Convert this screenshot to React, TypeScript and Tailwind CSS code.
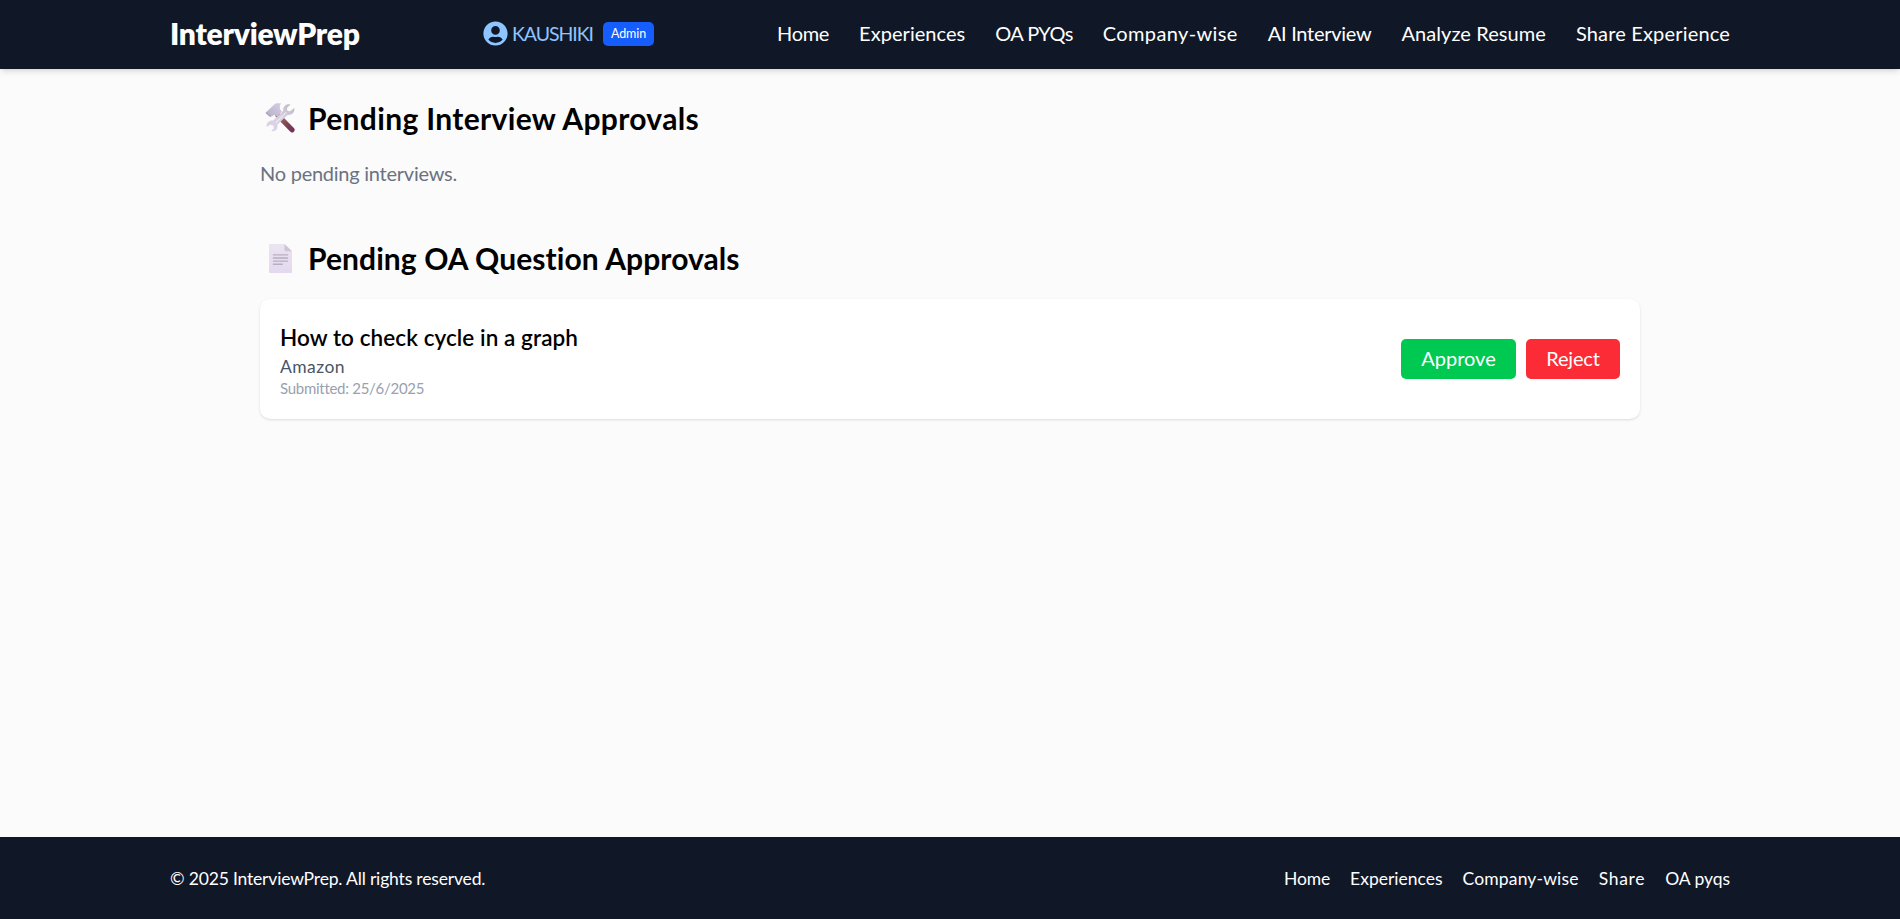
import { FaUserCircle } from 'react-icons/fa';

const navLinks = [
  { label: 'Home', tracking: 'tracking-[-0.3px]' },
  { label: 'Experiences', tracking: 'tracking-[0.05px]' },
  { label: 'OA PYQs', tracking: 'tracking-[-0.6px]' },
  { label: 'Company-wise', tracking: 'tracking-[0.38px]' },
  { label: 'AI Interview', tracking: 'tracking-[-0.28px]' },
  { label: 'Analyze Resume', tracking: 'tracking-[0.08px]' },
  { label: 'Share Experience', tracking: 'tracking-[0.17px]' },
];

const footerLinks = [
  { label: 'Home', tracking: 'tracking-[-0.15px]' },
  { label: 'Experiences', tracking: 'tracking-[0px]' },
  { label: 'Company-wise', tracking: 'tracking-[0.16px]' },
  { label: 'Share', tracking: 'tracking-[0.7px]' },
  { label: 'OA pyqs', tracking: 'tracking-[-0.05px]' },
];

function ToolsIcon() {
  return (
    <svg className="size-[30px]" viewBox="0 0 30 30" fill="none">
      <defs>
        <linearGradient id="handle" x1="13" y1="12" x2="28" y2="28" gradientUnits="userSpaceOnUse">
          <stop stopColor="#a4716b" />
          <stop offset="0.6" stopColor="#7d4450" />
          <stop offset="1" stopColor="#73305c" />
        </linearGradient>
        <linearGradient id="steel" x1="28" y1="2" x2="6" y2="28" gradientUnits="userSpaceOnUse">
          <stop stopColor="#bfb9c6" />
          <stop offset="0.5" stopColor="#d6d0de" />
          <stop offset="1" stopColor="#ddd3ec" />
        </linearGradient>
        <linearGradient id="head" x1="14" y1="2" x2="3" y2="13" gradientUnits="userSpaceOnUse">
          <stop stopColor="#d3cae2" />
          <stop offset="1" stopColor="#b9b3c6" />
        </linearGradient>
      </defs>
      <path d="M13 12.5L27 26.8" stroke="url(#handle)" strokeWidth="5.2" strokeLinecap="round" />
      <path d="M0.5 9.8L9.6 1.2Q10.6 0.3 12 0.3H16L14.8 3.2L15 6.3L17 8.6L12.2 13.8L9.8 11.8L5.2 14Z" fill="url(#head)" />
      <path d="M1.2 9.4L5.4 13.3" stroke="#a9a2b8" strokeWidth="1.4" />
      <path
        d="M25.4 1.5L22 5L22.4 7.9L25.2 8.3L29.3 5.1C30.1 9.3 26.8 12.7 22.6 11.9L12.3 21.8C13.4 25.8 10.2 29.2 6.2 28.1L8.9 25.3L8.3 22.4L5.4 21.8L1.7 24.1C1 20 4.1 16.9 8.2 17.6L18.2 8C17.6 3.6 21.3 0.1 25.4 1.5Z"
        fill="url(#steel)"
      />
      <path d="M11 19.5L21 9.7" stroke="#eae5f0" strokeWidth="1.2" strokeLinecap="round" />
    </svg>
  );
}

function PageIcon() {
  return (
    <svg className="h-[29px] w-[23px]" viewBox="0 0 23 29" fill="none">
      <defs>
        <linearGradient id="sheet" x1="11" y1="0" x2="11" y2="29" gradientUnits="userSpaceOnUse">
          <stop stopColor="#ebe4f1" />
          <stop offset="1" stopColor="#e3d9f0" />
        </linearGradient>
      </defs>
      <path d="M1 0H15.5L23 7.3V28Q23 29 22 29H1Q0 29 0 28V1Q0 0 1 0Z" fill="url(#sheet)" />
      <path d="M15.5 0L23 7.3H17Q15.5 7.3 15.5 5.8Z" fill="#cdc5d3" />
      <path d="M4.4 10.9H18.6M4.4 14H18.6M4.4 17.1H18.6M4.4 20.3H13.4" stroke="#b6afbf" strokeWidth="1.4" strokeLinecap="round" />
    </svg>
  );
}

function Header() {
  return (
    <header className="h-[69px] bg-gray-900 text-white shadow-md">
      <div className="mx-auto flex h-full w-[1560px] items-center justify-between pb-0.5">
        <div className="w-[190px] pb-px text-[30px] font-extrabold tracking-[-0.25px]">InterviewPrep</div>
        <div className="flex items-center">
          <FaUserCircle className="size-[25px] text-blue-300" />
          <span className="ml-1 w-[91px] text-[19.5px] tracking-[-1.05px] text-blue-300">KAUSHIKI</span>
          <span className="mt-px flex h-6 w-[51px] items-center justify-center rounded-[5px] bg-blue-600 text-[12.5px] tracking-[-0.1px]">
            Admin
          </span>
        </div>
        <nav className="flex gap-[30px] pb-px text-[20px]">
          {navLinks.map(({ label, tracking }) => (
            <a key={label} href="#" className={tracking}>
              {label}
            </a>
          ))}
        </nav>
      </div>
    </header>
  );
}

function Footer() {
  return (
    <footer className="h-[82px] bg-gray-900 text-[17.5px] text-white">
      <div className="mx-auto flex h-full w-[1560px] items-center justify-between pt-0.5">
        <p className="tracking-[-0.17px]">© 2025 InterviewPrep. All rights reserved.</p>
        <nav className="flex gap-5">
          {footerLinks.map(({ label, tracking }) => (
            <a key={label} href="#" className={tracking}>
              {label}
            </a>
          ))}
        </nav>
      </div>
    </footer>
  );
}

export default function App() {
  return (
    <div className="flex h-[919px] flex-col bg-[#fbfbfb] font-[Lato,sans-serif]">
      <Header />
      <main className="mx-auto w-[1380px] grow pt-[29px]">
        <section>
          <h2 className="flex h-10 items-center text-[30px] font-bold tracking-[0.34px] text-black">
            <span className="flex w-12 justify-start pl-[5px]">
              <ToolsIcon />
            </span>
            Pending Interview Approvals
          </h2>
          <p className="mt-5 h-[30px] text-[20px] leading-[30px] tracking-[-0.25px] text-gray-500">No pending interviews.</p>
        </section>
        <section className="mt-[50px]">
          <h2 className="flex h-10 items-center text-[30px] font-bold tracking-[0.08px] text-black">
            <span className="flex w-12 justify-start pl-[9px]">
              <PageIcon />
            </span>
            Pending OA Question Approvals
          </h2>
          <article className="mt-[21px] flex h-[120px] items-center justify-between rounded-[10px] bg-white px-5 shadow">
            <div className="flex flex-col pb-1">
              <h3 className="pt-0.5 text-[22.5px] leading-[35px] font-semibold tracking-[0.07px] text-black">How to check cycle in a graph</h3>
              <p className="text-[17.5px] leading-[24px] tracking-[0.45px] text-gray-600">Amazon</p>
              <p className="text-[15px] leading-[18px] tracking-[-0.28px] text-gray-400">Submitted: 25/6/2025</p>
            </div>
            <div className="flex gap-2.5 text-[20px] text-white">
              <button className="h-10 w-[115px] rounded-[5px] bg-green-500 pb-0.5">Approve</button>
              <button className="h-10 w-[94px] rounded-[5px] bg-red-500 pb-0.5 tracking-[-0.2px]">Reject</button>
            </div>
          </article>
        </section>
      </main>
      <Footer />
    </div>
  );
}
